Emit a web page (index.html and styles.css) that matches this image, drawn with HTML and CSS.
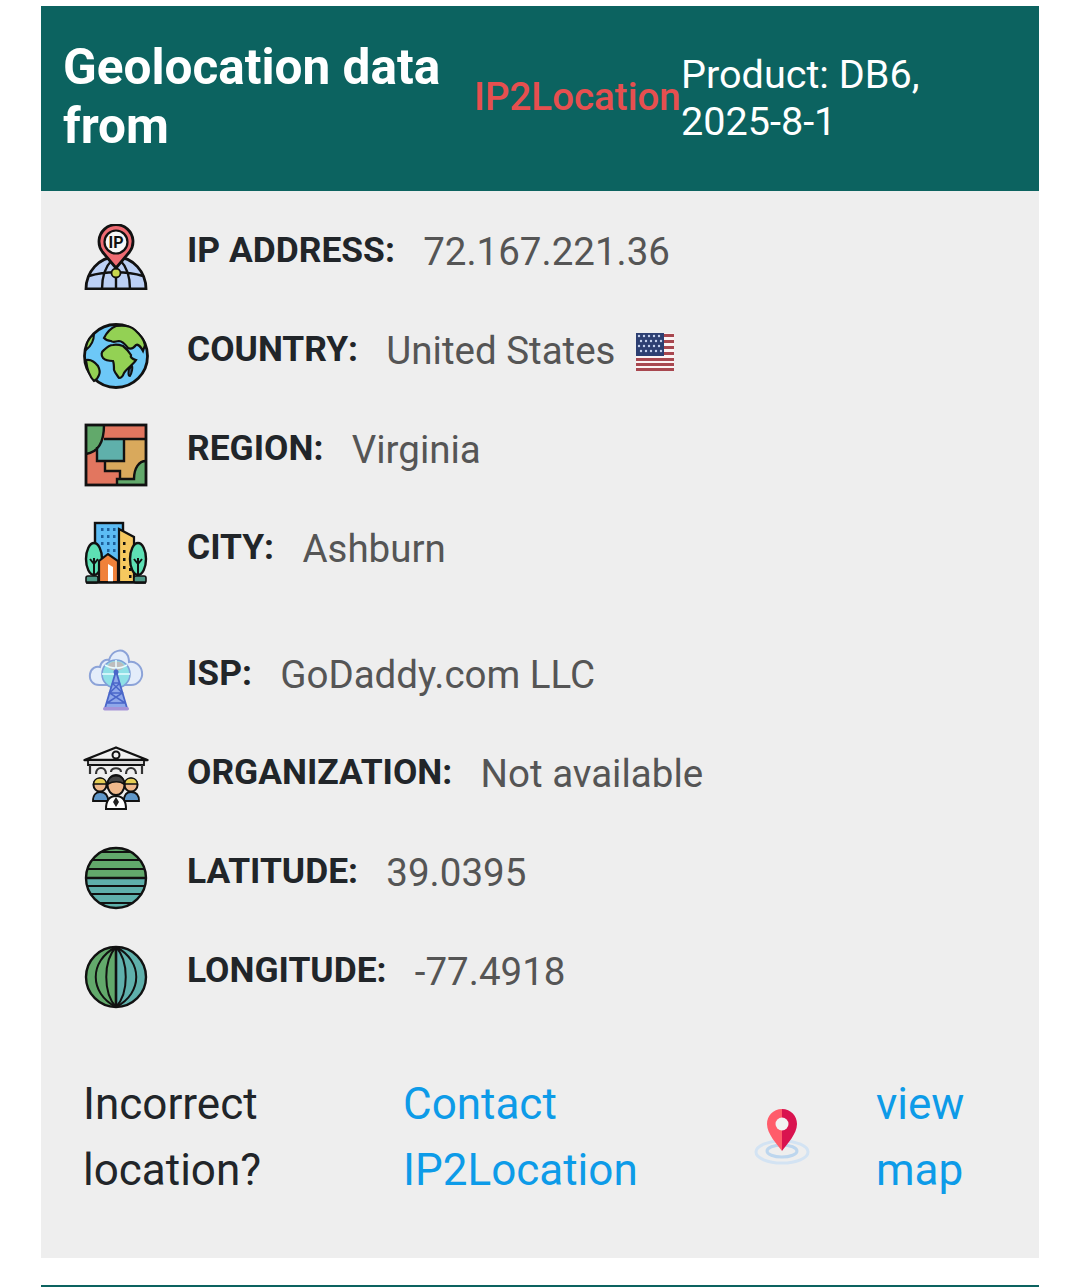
FILE: index.html
```html
<!DOCTYPE html>
<html lang="en">
<head>
<meta charset="utf-8">
<title>Geolocation data</title>
<link rel="stylesheet" href="styles.css">
</head>
<body>
<section class="card">
  <header class="card-head">
    <h1 class="head-title">Geolocation data from</h1>
    <a class="head-brand">IP2Location</a>
    <p class="head-product">Product: DB6, 2025-8-1</p>
  </header>
  <div class="card-body">
    <div class="group">
      <div class="row">
        <svg class="icon" viewBox="-2 0 66 66">
          <path d="M1 65C1 48 14 33 31 33S61 48 61 65Z" fill="#bcd0f5" stroke="#111" stroke-width="2.800"/>
          <path d="M17 65C17 52 21 42 27 36M45 65C45 52 41 42 35 36M31 50V65M4 52C20 47 42 47 58 52" fill="none" stroke="#111" stroke-width="2.400"/>
          <circle cx="31" cy="49" r="4.500" fill="#c8d84f" stroke="#111" stroke-width="1.800"/>
          <path d="M31 44L17.500 28A17 17 0 1 1 44.500 28Z" fill="#ee6b72" stroke="#111" stroke-width="2.800" stroke-linejoin="round"/>
          <circle cx="31" cy="18" r="11.500" fill="#f7f7f7" stroke="#111" stroke-width="2.200"/>
          <text x="31" y="24" class="pin-text">IP</text>
        </svg>
        <span class="label">IP ADDRESS:</span><span class="value">72.167.221.36</span>
      </div>
      <div class="row">
        <svg class="icon" viewBox="0 0 66 66">
          <circle cx="33" cy="33" r="31.500" fill="#6dc8f7" stroke="#111" stroke-width="2.800"/>
          <path d="M21 15C24 9 28 5 33 3C40 2 48 3 52 7C57 12 61 16 62 22L60 28C58 24 55 21 53 22C50 26 47 26 45 25C42 21 39 18 36 18C32 19 29 19 28 18C25 18 23 17 21 15Z" fill="#93d154" stroke="#111" stroke-width="2.200"/>
          <path d="M21 27C24 24 27 22 30 22C34 21 37 22 40 23C44 26 46 29 48 32C47 34 49 36 53 37C50 42 44 45 41 50C40 53 38 55 36 55C34 52 32 50 31 47C31 43 31 40 30 38C26 38 22 37 20 35C18 32 18 29 21 27Z" fill="#93d154" stroke="#111" stroke-width="2.200"/>
          <path d="M3 37C8 36 12 39 15 43C17 47 17 50 16 52C15 55 13 57 11 58C7 54 4 46 3 37Z" fill="#93d154" stroke="#111" stroke-width="2.200"/>
          <path d="M11 11C11 17 8 23 3 27C3 21 6 15 11 11Z" fill="#93d154" stroke="#111" stroke-width="2"/>
          <path d="M49 43C50 44 49 50 47 53C45 53 45 49 46 46Z" fill="#35506b" stroke="#111" stroke-width="1.800"/>
        </svg>
        <span class="label">COUNTRY:</span><span class="value">United States</span>
        <svg class="flag" viewBox="0 0 38 38">
          <rect width="38" height="38" fill="#fbf3f3"/>
          <g fill="#a8474f">
            <rect x="28" y="1" width="10" height="3"/><rect x="28" y="7" width="10" height="3"/><rect x="28" y="13" width="10" height="3"/><rect x="28" y="19" width="10" height="3"/>
            <rect y="25" width="38" height="3"/><rect y="30" width="38" height="3"/><rect y="35" width="38" height="3"/>
          </g>
          <rect width="28" height="23" fill="#2d3f72"/>
          <g fill="#c5d2ee">
            <circle cx="3" cy="3" r="1.200"/><circle cx="8" cy="3" r="1.200"/><circle cx="13" cy="3" r="1.200"/><circle cx="18" cy="3" r="1.200"/><circle cx="23" cy="3" r="1.200"/>
            <circle cx="5" cy="8" r="1.200"/><circle cx="10" cy="8" r="1.200"/><circle cx="15" cy="8" r="1.200"/><circle cx="20" cy="8" r="1.200"/><circle cx="25" cy="8" r="1.200"/>
            <circle cx="3" cy="13" r="1.200"/><circle cx="8" cy="13" r="1.200"/><circle cx="13" cy="13" r="1.200"/><circle cx="18" cy="13" r="1.200"/><circle cx="23" cy="13" r="1.200"/>
            <circle cx="5" cy="18" r="1.200"/><circle cx="10" cy="18" r="1.200"/><circle cx="15" cy="18" r="1.200"/><circle cx="20" cy="18" r="1.200"/><circle cx="25" cy="18" r="1.200"/>
          </g>
        </svg>
      </div>
      <div class="row">
        <svg class="icon" viewBox="-2 -2 66 66">
          <rect x="1" y="1" width="60" height="60" fill="#e2765f"/>
          <path d="M39 15H61V61H33V55H35V47H20V38H39Z" fill="#d9a95c"/>
          <path d="M12 16H39V37H12Z" fill="#5fb0ab"/>
          <path d="M1 1H19C19 18 14 28 1 30Z" fill="#62a96b"/>
          <path d="M61 37C54 37 49 44 49 55H32V61H61Z" fill="#62a96b"/>
          <path d="M19 1C19 18 14 28 1 30M19 15H61M12 23V37H39V15M20 37V47H35V55H32V61M32 55H49C49 44 54 37 61 37" fill="none" stroke="#111" stroke-width="2.400"/>
          <rect x="1" y="1" width="60" height="60" fill="none" stroke="#111" stroke-width="2.800"/>
        </svg>
        <span class="label">REGION:</span><span class="value">Virginia</span>
      </div>
      <div class="row">
        <svg class="icon" viewBox="-2 -1 66 66">
          <rect x="10" y="1" width="28" height="50" fill="#5cbcf4" stroke="#111" stroke-width="2.400"/>
          <g fill="#1d5f9a"><rect x="16" y="6" width="2.500" height="3"/><rect x="22" y="6" width="2.500" height="3"/><rect x="28" y="6" width="2.500" height="3"/><rect x="16" y="13" width="2.500" height="3"/><rect x="22" y="13" width="2.500" height="3"/><rect x="28" y="13" width="2.500" height="3"/><rect x="16" y="20" width="2.500" height="3"/><rect x="22" y="20" width="2.500" height="3"/><rect x="28" y="20" width="2.500" height="3"/><rect x="22" y="27" width="2.500" height="3"/><rect x="28" y="27" width="2.500" height="3"/></g>
          <path d="M34 7L49 15V60H34Z" fill="#f6c85f" stroke="#111" stroke-width="2.200"/>
          <g fill="#111"><rect x="38" y="20" width="2.500" height="3"/><rect x="38" y="28" width="2.500" height="3"/><rect x="38" y="36" width="2.500" height="3"/><rect x="38" y="44" width="2.500" height="3"/><rect x="44" y="46" width="2.500" height="3"/><rect x="44" y="53" width="2.500" height="3"/></g>
          <ellipse cx="9" cy="37" rx="8" ry="16" fill="#5de0b4" stroke="#111" stroke-width="2.400"/>
          <ellipse cx="53" cy="37" rx="8" ry="16" fill="#5de0b4" stroke="#111" stroke-width="2.400"/>
          <path d="M9 60V36M5 37L9 42L13 37M53 60V36M49 37L53 42L57 37" fill="none" stroke="#111" stroke-width="2"/>
          <rect x="1" y="54" width="12" height="7" rx="2" fill="#4f9a88" stroke="#111" stroke-width="1.600"/><rect x="49" y="54" width="12" height="7" rx="2" fill="#4f9a88" stroke="#111" stroke-width="1.600"/>
          <path d="M14 60V39L23 32L33 39V60Z" fill="#f0813a" stroke="#111" stroke-width="2.200"/>
          <path d="M23 60V42L28 45V60Z" fill="#fff"/>
          <path d="M1 60.500H61" stroke="#111" stroke-width="2.600"/>
        </svg>
        <span class="label">CITY:</span><span class="value">Ashburn</span>
      </div>
    </div>
    <div class="group">
      <div class="row">
        <svg class="icon" viewBox="0 0 66 66">
          <path d="M18 38C10 39 6 33 7 27C8 21 13 19 17 20C18 14 23 12 26 13C29 3 40 0 45 9C46 12 46 14 46 15C52 14 58 18 59 25C60 32 55 38 48 38Z" fill="#e4edfa" stroke="#8ca3d8" stroke-width="2"/>
          <circle cx="33" cy="27" r="14" fill="#8fe0e6" stroke="#7fa0d8" stroke-width="1.600"/>
          <ellipse cx="33" cy="19" rx="8" ry="4.500" fill="#bdbdbd"/>
          <path d="M19 27H47M33 13V41M22 18C28 22 38 22 44 18" fill="none" stroke="#e9fbff" stroke-width="1.600"/>
          <path d="M33 24L22 61H44Z" fill="#8fa8ea" stroke="#4a66c9" stroke-width="1.800"/>
          <path d="M29 36H37M26.500 46H39.500M24 56H42M29 36L39.500 46L24 56M37 36L26.500 46L42 56" fill="none" stroke="#4a66c9" stroke-width="1.500"/>
          <circle cx="33" cy="25" r="2.500" fill="#4a66c9"/>
          <rect x="20" y="60" width="26" height="3.500" rx="1.700" fill="#a593d8"/>
        </svg>
        <span class="label">ISP:</span><span class="value">GoDaddy.com LLC</span>
      </div>
      <div class="row">
        <svg class="icon" viewBox="0 0 66 66">
          <path d="M1.500 14L33 1.500L64.500 14Z" fill="#f1f1f1" stroke="#111" stroke-width="2.400" stroke-linejoin="round"/>
          <circle cx="33" cy="9" r="3.500" fill="#f1f1f1" stroke="#111" stroke-width="2"/>
          <path d="M5 14H61V19H5Z" fill="#d9d9d9" stroke="#111" stroke-width="1.800"/>
          <path d="M7 19V28M59 19V28M13 28C13 20 23 20 23 28M28 26C28 21 38 21 38 26M43 28C43 20 53 20 53 28" fill="none" stroke="#333" stroke-width="2.200"/>
          <path d="M10 55C10 48 14 46 17 46C22 46 25 48 25 55ZM41 55C41 48 44 46 48 46C53 46 56 48 56 55Z" fill="#5f97c9" stroke="#111" stroke-width="1.800"/>
          <circle cx="17" cy="39" r="6.500" fill="#f0b98c" stroke="#111" stroke-width="2"/>
          <circle cx="48" cy="39" r="6.500" fill="#f0b98c" stroke="#111" stroke-width="2"/>
          <path d="M10.500 38C11 30 23 30 23.500 38ZM41.500 38C42 30 54 30 54.500 38Z" fill="#e7cf55" stroke="#111" stroke-width="1.600"/>
          <path d="M23 63C23 53 27 50 33 50S43 53 43 63Z" fill="#fff" stroke="#111" stroke-width="2"/>
          <path d="M33 51L30 56L33 61L36 56Z" fill="#222"/>
          <ellipse cx="33" cy="39" rx="8.500" ry="10" fill="#f0b98c" stroke="#111" stroke-width="2"/>
          <path d="M25 38C23 27 43 27 41 38C37 35 30 35 25 38Z" fill="#444" stroke="#111" stroke-width="1.600"/>
        </svg>
        <span class="label">ORGANIZATION:</span><span class="value">Not available</span>
      </div>
      <div class="row">
        <svg class="icon" viewBox="-2 -2 66 66">
          <defs><clipPath id="globe-lat"><circle cx="31" cy="31" r="30"/></clipPath></defs>
          <g clip-path="url(#globe-lat)">
            <rect width="62" height="31" fill="#62a96b"/>
            <rect y="31" width="62" height="31" fill="#5fb0ab"/>
            <path d="M0 5H62M0 13H62M0 22H62M0 39H62M0 47H62M0 56H62" stroke="#111" stroke-width="2"/>
            <path d="M0 31H62" stroke="#111" stroke-width="2.600"/>
          </g>
          <circle cx="31" cy="31" r="30" fill="none" stroke="#111" stroke-width="2.400"/>
        </svg>
        <span class="label">LATITUDE:</span><span class="value">39.0395</span>
      </div>
      <div class="row">
        <svg class="icon" viewBox="-2 -2 66 66">
          <defs><clipPath id="globe-lon"><circle cx="31" cy="31" r="30"/></clipPath></defs>
          <g clip-path="url(#globe-lon)">
            <rect width="31" height="62" fill="#62a96b"/>
            <rect x="31" width="31" height="62" fill="#5fb0ab"/>
          </g>
          <path d="M31 1V61" stroke="#111" stroke-width="2.600"/>
          <path d="M31 1C18 15 18 47 31 61M31 1C44 15 44 47 31 61M31 1C4 15 4 47 31 61M31 1C58 15 58 47 31 61" fill="none" stroke="#111" stroke-width="2"/>
          <circle cx="31" cy="31" r="30" fill="none" stroke="#111" stroke-width="2.400"/>
        </svg>
        <span class="label">LONGITUDE:</span><span class="value">-77.4918</span>
      </div>
    </div>
    <footer class="foot">
      <p class="foot-text">Incorrect location?</p>
      <a class="foot-link foot-contact">Contact IP2Location</a>
      <svg class="map-icon" viewBox="0 0 56 58">
        <ellipse cx="28" cy="44" rx="26" ry="11" fill="none" stroke="#d3e3f3" stroke-width="3"/>
        <ellipse cx="28" cy="43" rx="15" ry="6" fill="none" stroke="#bdd6ee" stroke-width="3"/>
        <path d="M28 1C19 1 13 8 13 16C13 26 23 36 28 43Z" fill="#ff5c6a"/>
        <path d="M28 1C37 1 43 8 43 16C43 26 33 36 28 43Z" fill="#d9134f"/>
        <circle cx="28" cy="16" r="6.500" fill="#f2f2f2"/>
      </svg>
      <a class="foot-link foot-map">view map</a>
    </footer>
  </div>
</section>
<div class="rule"></div>
</body>
</html>
```
FILE: styles.css
```css
html, body {
  margin: 0;
  padding: 0;
  background: #fff;
}
body {
  padding: 6px 41px 0;
  font-family: Roboto, "Liberation Sans", sans-serif;
  height: 1281px;
  overflow: hidden;
}
.card {
  background: #eeeeee;
}
.card-head {
  background: #0c6360;
  height: 185px;
  box-sizing: border-box;
  padding: 0 22px;
  display: flex;
  align-items: center;
}
.head-title {
  margin: -4px 0 0;
  width: 411px;
  flex: none;
  color: #fff;
  font-size: 49.5px;
  line-height: 59px;
  font-weight: 700;
}
.head-brand {
  color: #e64f4f;
  font-size: 38.5px;
  font-weight: 500;
  flex: none;
  width: 207px;
  margin-top: -4px;
  white-space: nowrap;
}
.head-product {
  margin: -2px 0 0;
  width: 290px;
  color: #fff;
  font-size: 39.6px;
  line-height: 47px;
}
.card-body {
  display: flex;
  flex-direction: column;
  padding: 30px 42px 0;
  height: 1067px;
  box-sizing: border-box;
}
.group {
  display: flex;
  flex-direction: column;
  gap: 37px;
  margin-bottom: 64px;
}
.row {
  display: flex;
  align-items: center;
  height: 62px;
}
.icon {
  width: 66px;
  height: 66px;
  flex: none;
  margin: 3px 38px -7px 0;
}
.label {
  font-size: 35.4px;
  font-weight: 700;
  color: #212529;
  margin-top: -4px;
}
.value {
  font-size: 38.5px;
  color: #555;
  margin: -2px 0 0 28.3px;
}
.flag {
  width: 38px;
  height: 38px;
  margin: 2px 0 0 21px;
}
.pin-text {
  font-family: Roboto, sans-serif;
  font-size: 16px;
  font-weight: 700;
  text-anchor: middle;
  fill: #111;
}
.foot {
  display: flex;
  align-items: center;
  margin-top: 4px;
}
.foot-text, .foot-link {
  font-size: 44px;
  line-height: 66px;
  margin: 0;
}
.foot-text {
  color: #212529;
  width: 320px;
}
.foot-link {
  color: #0d9be8;
}
.foot-contact {
  width: 351px;
}
.map-icon {
  width: 56px;
  height: 58px;
  flex: none;
}
.foot-map {
  width: 100px;
  margin-left: 66px;
}
.rule {
  height: 2px;
  margin-top: 27px;
  background: #0c6360;
}
```
